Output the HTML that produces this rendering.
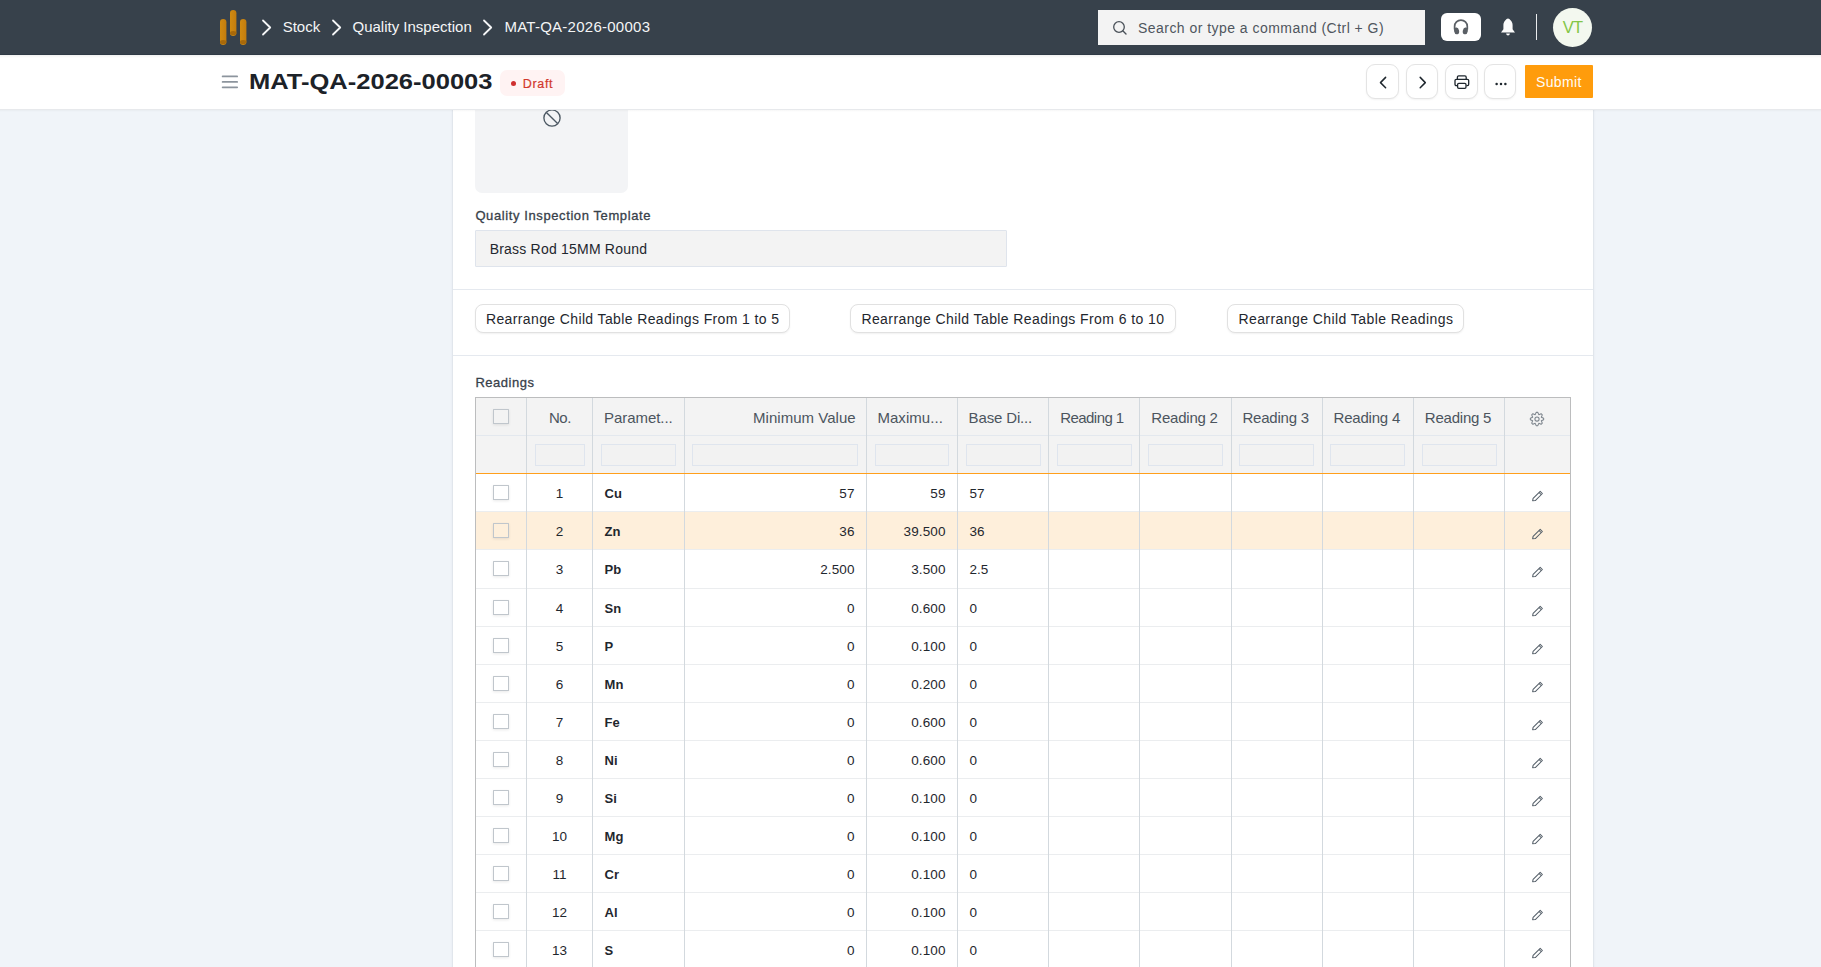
<!DOCTYPE html>
<html><head><meta charset="utf-8"><title>MAT-QA-2026-00003</title>
<style>
*{box-sizing:border-box;margin:0;padding:0}
html,body{width:1821px;height:967px;overflow:hidden}
body{position:relative;background:#f0f4f9;font-family:"Liberation Sans",sans-serif;color:#1f272e}
.abs{position:absolute}
.t{position:absolute;white-space:nowrap}
.z4{z-index:4}
.tbtn{top:64px;height:34.6px;border:1px solid #e4e4e4;border-radius:9px;background:#fff;box-shadow:0 1px 2px rgba(0,0,0,0.05)}
.btn{top:304.2px;height:29.3px;border:1px solid #e1e1e1;border-radius:8px;background:#fff;box-shadow:0 1px 2px rgba(0,0,0,0.06)}
.cb{width:15.5px;height:15px;border:1px solid #c0c6cc;border-radius:0.5px;background:transparent;box-shadow:0 1px 3px rgba(0,0,0,0.09)}
</style></head><body>
<div class="abs" style="left:0;top:0;width:1821px;height:54px;background:#37414b"></div>
<div class="abs" style="left:0;top:54px;width:1821px;height:1px;background:#2f3a45"></div>
<svg class="abs" style="left:218px;top:8px" width="32" height="40" viewBox="0 0 32 40">
<defs><linearGradient id="lg" x1="0" x2="1"><stop offset="0" stop-color="#d18a10"/><stop offset="1" stop-color="#c27c0e"/></linearGradient></defs>
<rect x="2" y="11" width="6.4" height="26" rx="3.2" fill="url(#lg)"/><ellipse cx="5.2" cy="34" rx="3.2" ry="2" fill="#a8690a"/>
<rect x="12" y="2" width="6.4" height="26" rx="3.2" fill="url(#lg)"/><ellipse cx="15.2" cy="25" rx="3.2" ry="2" fill="#a8690a"/>
<rect x="22" y="11" width="6.4" height="26" rx="3.2" fill="url(#lg)"/><ellipse cx="25.2" cy="34" rx="3.2" ry="2" fill="#a8690a"/>
</svg>
<svg class="abs" style="left:261px;top:19px" width="12" height="17" viewBox="0 0 12 17"><path d="M2 1.5 L9.2 8.5 L2 15.5" fill="none" stroke="#f5f6f7" stroke-width="1.8" stroke-linecap="round" stroke-linejoin="round"/></svg>
<svg class="abs" style="left:330.5px;top:19px" width="12" height="17" viewBox="0 0 12 17"><path d="M2 1.5 L9.2 8.5 L2 15.5" fill="none" stroke="#f5f6f7" stroke-width="1.8" stroke-linecap="round" stroke-linejoin="round"/></svg>
<svg class="abs" style="left:482px;top:19px" width="12" height="17" viewBox="0 0 12 17"><path d="M2 1.5 L9.2 8.5 L2 15.5" fill="none" stroke="#f5f6f7" stroke-width="1.8" stroke-linecap="round" stroke-linejoin="round"/></svg>
<div class="t " style="top:19.30px;font-size:15px;line-height:15px;left:282.7px;color:#f4f5f6;">Stock</div>
<div class="t " style="top:19.30px;font-size:15px;line-height:15px;left:352.5px;color:#f4f5f6;">Quality Inspection</div>
<div class="t " style="top:19.30px;font-size:15px;line-height:15px;left:504.4px;color:#f4f5f6;letter-spacing:0.26px;">MAT-QA-2026-00003</div>
<div class="abs" style="left:1098px;top:10px;width:327px;height:35px;background:#f3f3f3;border-radius:0"></div>
<svg class="abs" style="left:1112px;top:20px" width="16" height="16" viewBox="0 0 16 16"><circle cx="7" cy="7" r="5.3" fill="none" stroke="#4a5159" stroke-width="1.3"/><path d="M11 11 L14 14" stroke="#4a5159" stroke-width="1.4" stroke-linecap="round"/></svg>
<div class="t " style="top:20.85px;font-size:14px;line-height:14px;left:1138px;color:#4f565e;letter-spacing:0.46px;">Search or type a command (Ctrl + G)</div>
<div class="abs" style="left:1441px;top:13px;width:40px;height:28px;background:#fff;border-radius:6px"></div>
<svg class="abs" style="left:1452px;top:17px" width="18" height="18" viewBox="0 0 18 18">
<path d="M2.6 12.5 V9.4 a6.35 6.35 0 0 1 12.7 0 V12.5" fill="none" stroke="#5a5f65" stroke-width="1.7"/>
<ellipse cx="4.6" cy="13.9" rx="2.5" ry="3.4" transform="rotate(-12 4.6 13.9)" fill="#5a5f65"/>
<ellipse cx="13.3" cy="13.9" rx="2.5" ry="3.4" transform="rotate(12 13.3 13.9)" fill="#5a5f65"/>
</svg>
<svg class="abs" style="left:1500px;top:18px" width="16" height="18" viewBox="0 0 16 18">
<path d="M8 0.5 C7 0.5 6.2 1.3 5.2 2.6 C4 4 3.4 5.4 3.4 7.2 V11.3 L1 14.6 H15 L12.6 11.3 V7.2 C12.6 5.4 12 4 10.8 2.6 C9.8 1.3 9 0.5 8 0.5 Z" fill="#fbfbfb"/>
<path d="M6.1 15.6 C6.3 16.9 7 17.4 8 17.4 C9 17.4 9.7 16.9 9.9 15.6 Z" fill="#fbfbfb"/>
</svg>
<div class="abs" style="left:1536px;top:14px;width:1px;height:26px;background:#e9ebed"></div>
<div class="abs" style="left:1553px;top:7.8px;width:39.2px;height:39.2px;border-radius:50%;background:#f3f8ef"></div>
<div class="t " style="top:19.03px;font-size:16.5px;line-height:16.5px;left:1562.8px;color:#82c648;letter-spacing:-0.9px;">VT</div>
<div class="abs" style="left:0;top:55px;width:1821px;height:54px;background:#fff;z-index:3"></div>
<div class="abs" style="left:0;top:55px;width:1821px;height:3px;background:linear-gradient(rgba(0,0,0,0.06),rgba(0,0,0,0));z-index:3"></div>
<div class="abs" style="left:0;top:109px;width:1821px;height:1px;background:#e7e9ec;z-index:3"></div>
<div class="abs" style="left:0;top:110px;width:1821px;height:2px;background:linear-gradient(rgba(0,0,0,0.035),rgba(0,0,0,0));z-index:3"></div>
<svg class="abs z4" style="left:218px;top:70px" width="24" height="24" viewBox="0 0 24 24"><g stroke="#8c949d" stroke-width="1.7" stroke-linecap="round"><path d="M4.6 6.4 H19.2"/><path d="M4.6 11.9 H19.2"/><path d="M4.6 17.3 H19.2"/></g></svg>
<div class="t z4" style="top:70.68px;font-size:22px;line-height:22px;left:248.6px;font-weight:700;color:#1c2228;transform:scaleX(1.16);transform-origin:0 0;">MAT-QA-2026-00003</div>
<div class="abs z4" style="left:500px;top:70px;width:65px;height:26px;border-radius:7px;background:#fff3f3"></div>
<div class="abs z4" style="left:511px;top:80.6px;width:5px;height:5px;border-radius:50%;background:#cf2f2f"></div>
<div class="t z4" style="top:78.22px;font-size:12.5px;line-height:12.5px;left:522.8px;color:#d2382c;letter-spacing:0.65px;-webkit-text-stroke:0.2px #d2382c;">Draft</div>
<div class="abs z4 tbtn" style="left:1366px;width:32.5px"><svg class="abs" style="left:11px;top:10px" width="10" height="14" viewBox="0 0 10 14"><path d="M7.6 2.4 L2.5 7.6 L7.6 12.7" fill="none" stroke="#1f272e" stroke-width="1.5" stroke-linecap="round" stroke-linejoin="round"/></svg></div>
<div class="abs z4 tbtn" style="left:1406px;width:31.5px"><svg class="abs" style="left:10.5px;top:10px" width="10" height="14" viewBox="0 0 10 14"><path d="M2.2 2.4 L7.3 7.6 L2.2 12.7" fill="none" stroke="#1f272e" stroke-width="1.5" stroke-linecap="round" stroke-linejoin="round"/></svg></div>
<div class="abs z4 tbtn" style="left:1445.4px;width:32.2px"><svg class="abs" style="left:8px;top:9.5px" width="16" height="15" viewBox="0 0 16 15">
<path d="M3.4 4.3 V2.2 C3.4 1.4 4 0.9 4.7 0.9 H10.9 C11.6 0.9 12.2 1.4 12.2 2.2 V4.3" fill="none" stroke="#1f272e" stroke-width="1.3"/>
<path d="M3.2 10.6 H2.3 C1.5 10.6 1 10 1 9.3 V5.6 C1 4.8 1.6 4.3 2.3 4.3 H13.4 C14.2 4.3 14.7 4.9 14.7 5.6 V9.3 C14.7 10.1 14.1 10.6 13.4 10.6 H12.4" fill="none" stroke="#1f272e" stroke-width="1.3"/>
<rect x="3.6" y="8.4" width="8.4" height="4.9" rx="1.2" fill="none" stroke="#1f272e" stroke-width="1.3"/>
</svg></div>
<div class="abs z4 tbtn" style="left:1484.3px;width:32.2px"><svg class="abs" style="left:9px;top:17px" width="14" height="4" viewBox="0 0 14 4"><circle cx="2.6" cy="2" r="1.25" fill="#1f272e"/><circle cx="7" cy="2" r="1.25" fill="#1f272e"/><circle cx="11.4" cy="2" r="1.25" fill="#1f272e"/></svg></div>
<div class="abs z4" style="left:1524.7px;top:64.8px;width:68.5px;height:33.4px;background:#ff9c0c;border-radius:1px"></div>
<div class="t z4" style="top:74.85px;font-size:14px;line-height:14px;left:1536px;color:#fffdf8;letter-spacing:0.35px;">Submit</div>
<div class="abs" style="left:452px;top:90px;width:1142px;height:900px;background:#fff;border-left:1px solid #e1e6ec;border-right:1px solid #e1e6ec;box-shadow:0 0 2px rgba(30,50,80,0.06)"></div>
<div class="abs" style="left:475px;top:90px;width:153px;height:103px;background:#f3f4f6;border-radius:7px"></div>
<svg class="abs" style="left:542px;top:108px" width="20" height="20" viewBox="0 0 20 20"><circle cx="10" cy="10" r="8.1" fill="none" stroke="#4c5863" stroke-width="1.35"/><path d="M4.4 4.4 L15.6 15.6" stroke="#4c5863" stroke-width="1.35"/></svg>
<div class="t " style="top:209.10px;font-size:13px;line-height:13px;left:475.4px;color:#38414a;letter-spacing:0.6px;-webkit-text-stroke:0.3px #38414a;">Quality Inspection Template</div>
<div class="abs" style="left:475px;top:230px;width:532px;height:37px;background:#f3f3f3;border:1px solid #dfe4ec;border-radius:1px"></div>
<div class="t " style="top:241.95px;font-size:14px;line-height:14px;left:489.7px;color:#1f272e;letter-spacing:0.21px;">Brass Rod 15MM Round</div>
<div class="abs" style="left:453px;top:289px;width:1140px;height:1px;background:#e5e9ef"></div>
<div class="abs btn" style="left:474.5px;width:315px"></div><div class="t " style="top:312.15px;font-size:14px;line-height:14px;left:485.9px;color:#1f272e;letter-spacing:0.38px;">Rearrange Child Table Readings From 1 to 5</div>
<div class="abs btn" style="left:850px;width:326px"></div><div class="t " style="top:312.15px;font-size:14px;line-height:14px;left:861.4px;color:#1f272e;letter-spacing:0.41px;">Rearrange Child Table Readings From 6 to 10</div>
<div class="abs btn" style="left:1227px;width:237px"></div><div class="t " style="top:312.15px;font-size:14px;line-height:14px;left:1238.4px;color:#1f272e;letter-spacing:0.43px;">Rearrange Child Table Readings</div>
<div class="abs" style="left:453px;top:355px;width:1140px;height:1px;background:#e5e9ef"></div>
<div class="t " style="top:376.00px;font-size:13px;line-height:13px;left:475.4px;color:#38414a;letter-spacing:0.52px;-webkit-text-stroke:0.3px #38414a;">Readings</div>
<div class="abs" style="left:475px;top:397px;width:1096px;height:575px;background:#fff;border:1px solid #bcbdbe;border-bottom:none"></div>
<div class="abs" style="left:476px;top:398px;width:1094px;height:75px;background:#f3f3f3"></div>
<div class="abs" style="left:476px;top:512px;width:1094px;height:37px;background:#feefdb"></div>
<div class="abs" style="left:476px;top:435px;width:1094px;height:1px;background:#e3e8ee"></div>
<div class="abs" style="left:476px;top:511px;width:1094px;height:1px;background:#ebedef"></div>
<div class="abs" style="left:476px;top:549px;width:1094px;height:1px;background:#ebedef"></div>
<div class="abs" style="left:476px;top:588px;width:1094px;height:1px;background:#ebedef"></div>
<div class="abs" style="left:476px;top:626px;width:1094px;height:1px;background:#ebedef"></div>
<div class="abs" style="left:476px;top:664px;width:1094px;height:1px;background:#ebedef"></div>
<div class="abs" style="left:476px;top:702px;width:1094px;height:1px;background:#ebedef"></div>
<div class="abs" style="left:476px;top:740px;width:1094px;height:1px;background:#ebedef"></div>
<div class="abs" style="left:476px;top:778px;width:1094px;height:1px;background:#ebedef"></div>
<div class="abs" style="left:476px;top:816px;width:1094px;height:1px;background:#ebedef"></div>
<div class="abs" style="left:476px;top:854px;width:1094px;height:1px;background:#ebedef"></div>
<div class="abs" style="left:476px;top:892px;width:1094px;height:1px;background:#ebedef"></div>
<div class="abs" style="left:476px;top:930px;width:1094px;height:1px;background:#ebedef"></div>
<div class="abs" style="left:526px;top:398px;width:1px;height:570px;background:#d3d9de"></div>
<div class="abs" style="left:592px;top:398px;width:1px;height:570px;background:#d3d9de"></div>
<div class="abs" style="left:684px;top:398px;width:1px;height:570px;background:#d3d9de"></div>
<div class="abs" style="left:866px;top:398px;width:1px;height:570px;background:#d3d9de"></div>
<div class="abs" style="left:957px;top:398px;width:1px;height:570px;background:#d3d9de"></div>
<div class="abs" style="left:1048px;top:398px;width:1px;height:570px;background:#d3d9de"></div>
<div class="abs" style="left:1139px;top:398px;width:1px;height:570px;background:#d3d9de"></div>
<div class="abs" style="left:1231px;top:398px;width:1px;height:570px;background:#d3d9de"></div>
<div class="abs" style="left:1322px;top:398px;width:1px;height:570px;background:#d3d9de"></div>
<div class="abs" style="left:1413px;top:398px;width:1px;height:570px;background:#d3d9de"></div>
<div class="abs" style="left:1504px;top:398px;width:1px;height:570px;background:#d3d9de"></div>
<div class="abs" style="left:476px;top:473px;width:1094px;height:1px;background:#ff9f1c"></div>
<div class="abs cb" style="left:493px;top:409px"></div>
<div class="t " style="top:410.40px;font-size:15px;line-height:15px;left:529.9px;width:60px;text-align:center;color:#4c555e;letter-spacing:-0.45px;">No.</div>
<div class="t " style="top:410.40px;font-size:15px;line-height:15px;left:604.0px;color:#4c555e;letter-spacing:-0.05px;">Paramet...</div>
<div class="t " style="top:410.40px;font-size:15px;line-height:15px;right:965.4px;color:#4c555e;letter-spacing:0.02px;">Minimum Value</div>
<div class="t " style="top:410.40px;font-size:15px;line-height:15px;left:877.4px;color:#4c555e;letter-spacing:0.06px;">Maximu...</div>
<div class="t " style="top:410.40px;font-size:15px;line-height:15px;left:968.6px;color:#4c555e;letter-spacing:-0.15px;">Base Di...</div>
<div class="t " style="top:410.40px;font-size:15px;line-height:15px;left:1060.1999999999998px;color:#4c555e;letter-spacing:-0.55px;">Reading 1</div>
<div class="t " style="top:410.40px;font-size:15px;line-height:15px;left:1151.3px;color:#4c555e;letter-spacing:-0.22px;">Reading 2</div>
<div class="t " style="top:410.40px;font-size:15px;line-height:15px;left:1242.5px;color:#4c555e;letter-spacing:-0.22px;">Reading 3</div>
<div class="t " style="top:410.40px;font-size:15px;line-height:15px;left:1333.6px;color:#4c555e;letter-spacing:-0.22px;">Reading 4</div>
<div class="t " style="top:410.40px;font-size:15px;line-height:15px;left:1424.8px;color:#4c555e;letter-spacing:-0.22px;">Reading 5</div>
<svg class="abs" style="left:1529.4px;top:410.7px" width="16" height="16" viewBox="0 0 16 16"><g fill="none" stroke="#7d858d" stroke-width="1.05" stroke-linejoin="round"><path d="M7.18 1.35 L8.82 1.35 L9.80 3.66 L12.12 2.72 L13.28 3.88 L12.34 6.20 L14.65 7.18 L14.65 8.82 L12.34 9.80 L13.28 12.12 L12.12 13.28 L9.80 12.34 L8.82 14.65 L7.18 14.65 L6.20 12.34 L3.88 13.28 L2.72 12.12 L3.66 9.80 L1.35 8.82 L1.35 7.18 L3.66 6.20 L2.72 3.88 L3.88 2.72 L6.20 3.66 Z"/><circle cx="8" cy="8" r="2.1"/></g></svg>
<div class="abs" style="left:535px;top:444px;width:50px;height:22px;background:#f2f2f2;border:1px solid #dfe5ee"></div>
<div class="abs" style="left:601px;top:444px;width:75px;height:22px;background:#f2f2f2;border:1px solid #dfe5ee"></div>
<div class="abs" style="left:692px;top:444px;width:166px;height:22px;background:#f2f2f2;border:1px solid #dfe5ee"></div>
<div class="abs" style="left:875px;top:444px;width:74px;height:22px;background:#f2f2f2;border:1px solid #dfe5ee"></div>
<div class="abs" style="left:966px;top:444px;width:75px;height:22px;background:#f2f2f2;border:1px solid #dfe5ee"></div>
<div class="abs" style="left:1057px;top:444px;width:75px;height:22px;background:#f2f2f2;border:1px solid #dfe5ee"></div>
<div class="abs" style="left:1148px;top:444px;width:75px;height:22px;background:#f2f2f2;border:1px solid #dfe5ee"></div>
<div class="abs" style="left:1239px;top:444px;width:75px;height:22px;background:#f2f2f2;border:1px solid #dfe5ee"></div>
<div class="abs" style="left:1330px;top:444px;width:75px;height:22px;background:#f2f2f2;border:1px solid #dfe5ee"></div>
<div class="abs" style="left:1422px;top:444px;width:75px;height:22px;background:#f2f2f2;border:1px solid #dfe5ee"></div>
<div class="abs cb" style="left:493px;top:485.00px"></div>
<div class="t " style="top:486.57px;font-size:13.5px;line-height:13.5px;left:529.5px;width:60px;text-align:center;color:#1f272e;">1</div>
<div class="t " style="top:487.00px;font-size:13px;line-height:13px;left:604.6px;font-weight:700;color:#1f272e;">Cu</div>
<div class="t " style="top:486.57px;font-size:13.5px;line-height:13.5px;right:966.5px;color:#1f272e;letter-spacing:0.1px;">57</div>
<div class="t " style="top:486.57px;font-size:13.5px;line-height:13.5px;right:875.5px;color:#1f272e;letter-spacing:0.1px;">59</div>
<div class="t " style="top:486.57px;font-size:13.5px;line-height:13.5px;left:969.4px;color:#1f272e;letter-spacing:0.1px;">57</div>
<svg class="abs" style="left:1530px;top:490.00px" width="14" height="13" viewBox="0 0 14 13"><path d="M2.6 10.8 L3.1 8.4 L10.2 1.3 L12.4 3.5 L5.3 10.6 Z M9 2.5 L11.2 4.7" fill="none" stroke="#56606a" stroke-width="1.05" stroke-linejoin="round"/></svg>
<div class="abs cb" style="left:493px;top:523.00px"></div>
<div class="t " style="top:524.57px;font-size:13.5px;line-height:13.5px;left:529.5px;width:60px;text-align:center;color:#1f272e;">2</div>
<div class="t " style="top:525.00px;font-size:13px;line-height:13px;left:604.6px;font-weight:700;color:#1f272e;">Zn</div>
<div class="t " style="top:524.57px;font-size:13.5px;line-height:13.5px;right:966.5px;color:#1f272e;letter-spacing:0.1px;">36</div>
<div class="t " style="top:524.57px;font-size:13.5px;line-height:13.5px;right:875.5px;color:#1f272e;letter-spacing:0.1px;">39.500</div>
<div class="t " style="top:524.57px;font-size:13.5px;line-height:13.5px;left:969.4px;color:#1f272e;letter-spacing:0.1px;">36</div>
<svg class="abs" style="left:1530px;top:528.00px" width="14" height="13" viewBox="0 0 14 13"><path d="M2.6 10.8 L3.1 8.4 L10.2 1.3 L12.4 3.5 L5.3 10.6 Z M9 2.5 L11.2 4.7" fill="none" stroke="#56606a" stroke-width="1.05" stroke-linejoin="round"/></svg>
<div class="abs cb" style="left:493px;top:561.00px"></div>
<div class="t " style="top:562.57px;font-size:13.5px;line-height:13.5px;left:529.5px;width:60px;text-align:center;color:#1f272e;">3</div>
<div class="t " style="top:563.00px;font-size:13px;line-height:13px;left:604.6px;font-weight:700;color:#1f272e;">Pb</div>
<div class="t " style="top:562.57px;font-size:13.5px;line-height:13.5px;right:966.5px;color:#1f272e;letter-spacing:0.1px;">2.500</div>
<div class="t " style="top:562.57px;font-size:13.5px;line-height:13.5px;right:875.5px;color:#1f272e;letter-spacing:0.1px;">3.500</div>
<div class="t " style="top:562.57px;font-size:13.5px;line-height:13.5px;left:969.4px;color:#1f272e;letter-spacing:0.1px;">2.5</div>
<svg class="abs" style="left:1530px;top:566.00px" width="14" height="13" viewBox="0 0 14 13"><path d="M2.6 10.8 L3.1 8.4 L10.2 1.3 L12.4 3.5 L5.3 10.6 Z M9 2.5 L11.2 4.7" fill="none" stroke="#56606a" stroke-width="1.05" stroke-linejoin="round"/></svg>
<div class="abs cb" style="left:493px;top:600.00px"></div>
<div class="t " style="top:601.57px;font-size:13.5px;line-height:13.5px;left:529.5px;width:60px;text-align:center;color:#1f272e;">4</div>
<div class="t " style="top:602.00px;font-size:13px;line-height:13px;left:604.6px;font-weight:700;color:#1f272e;">Sn</div>
<div class="t " style="top:601.57px;font-size:13.5px;line-height:13.5px;right:966.5px;color:#1f272e;letter-spacing:0.1px;">0</div>
<div class="t " style="top:601.57px;font-size:13.5px;line-height:13.5px;right:875.5px;color:#1f272e;letter-spacing:0.1px;">0.600</div>
<div class="t " style="top:601.57px;font-size:13.5px;line-height:13.5px;left:969.4px;color:#1f272e;letter-spacing:0.1px;">0</div>
<svg class="abs" style="left:1530px;top:605.00px" width="14" height="13" viewBox="0 0 14 13"><path d="M2.6 10.8 L3.1 8.4 L10.2 1.3 L12.4 3.5 L5.3 10.6 Z M9 2.5 L11.2 4.7" fill="none" stroke="#56606a" stroke-width="1.05" stroke-linejoin="round"/></svg>
<div class="abs cb" style="left:493px;top:638.00px"></div>
<div class="t " style="top:639.57px;font-size:13.5px;line-height:13.5px;left:529.5px;width:60px;text-align:center;color:#1f272e;">5</div>
<div class="t " style="top:640.00px;font-size:13px;line-height:13px;left:604.6px;font-weight:700;color:#1f272e;">P</div>
<div class="t " style="top:639.57px;font-size:13.5px;line-height:13.5px;right:966.5px;color:#1f272e;letter-spacing:0.1px;">0</div>
<div class="t " style="top:639.57px;font-size:13.5px;line-height:13.5px;right:875.5px;color:#1f272e;letter-spacing:0.1px;">0.100</div>
<div class="t " style="top:639.57px;font-size:13.5px;line-height:13.5px;left:969.4px;color:#1f272e;letter-spacing:0.1px;">0</div>
<svg class="abs" style="left:1530px;top:643.00px" width="14" height="13" viewBox="0 0 14 13"><path d="M2.6 10.8 L3.1 8.4 L10.2 1.3 L12.4 3.5 L5.3 10.6 Z M9 2.5 L11.2 4.7" fill="none" stroke="#56606a" stroke-width="1.05" stroke-linejoin="round"/></svg>
<div class="abs cb" style="left:493px;top:676.00px"></div>
<div class="t " style="top:677.57px;font-size:13.5px;line-height:13.5px;left:529.5px;width:60px;text-align:center;color:#1f272e;">6</div>
<div class="t " style="top:678.00px;font-size:13px;line-height:13px;left:604.6px;font-weight:700;color:#1f272e;">Mn</div>
<div class="t " style="top:677.57px;font-size:13.5px;line-height:13.5px;right:966.5px;color:#1f272e;letter-spacing:0.1px;">0</div>
<div class="t " style="top:677.57px;font-size:13.5px;line-height:13.5px;right:875.5px;color:#1f272e;letter-spacing:0.1px;">0.200</div>
<div class="t " style="top:677.57px;font-size:13.5px;line-height:13.5px;left:969.4px;color:#1f272e;letter-spacing:0.1px;">0</div>
<svg class="abs" style="left:1530px;top:681.00px" width="14" height="13" viewBox="0 0 14 13"><path d="M2.6 10.8 L3.1 8.4 L10.2 1.3 L12.4 3.5 L5.3 10.6 Z M9 2.5 L11.2 4.7" fill="none" stroke="#56606a" stroke-width="1.05" stroke-linejoin="round"/></svg>
<div class="abs cb" style="left:493px;top:714.00px"></div>
<div class="t " style="top:715.57px;font-size:13.5px;line-height:13.5px;left:529.5px;width:60px;text-align:center;color:#1f272e;">7</div>
<div class="t " style="top:716.00px;font-size:13px;line-height:13px;left:604.6px;font-weight:700;color:#1f272e;">Fe</div>
<div class="t " style="top:715.57px;font-size:13.5px;line-height:13.5px;right:966.5px;color:#1f272e;letter-spacing:0.1px;">0</div>
<div class="t " style="top:715.57px;font-size:13.5px;line-height:13.5px;right:875.5px;color:#1f272e;letter-spacing:0.1px;">0.600</div>
<div class="t " style="top:715.57px;font-size:13.5px;line-height:13.5px;left:969.4px;color:#1f272e;letter-spacing:0.1px;">0</div>
<svg class="abs" style="left:1530px;top:719.00px" width="14" height="13" viewBox="0 0 14 13"><path d="M2.6 10.8 L3.1 8.4 L10.2 1.3 L12.4 3.5 L5.3 10.6 Z M9 2.5 L11.2 4.7" fill="none" stroke="#56606a" stroke-width="1.05" stroke-linejoin="round"/></svg>
<div class="abs cb" style="left:493px;top:752.00px"></div>
<div class="t " style="top:753.57px;font-size:13.5px;line-height:13.5px;left:529.5px;width:60px;text-align:center;color:#1f272e;">8</div>
<div class="t " style="top:754.00px;font-size:13px;line-height:13px;left:604.6px;font-weight:700;color:#1f272e;">Ni</div>
<div class="t " style="top:753.57px;font-size:13.5px;line-height:13.5px;right:966.5px;color:#1f272e;letter-spacing:0.1px;">0</div>
<div class="t " style="top:753.57px;font-size:13.5px;line-height:13.5px;right:875.5px;color:#1f272e;letter-spacing:0.1px;">0.600</div>
<div class="t " style="top:753.57px;font-size:13.5px;line-height:13.5px;left:969.4px;color:#1f272e;letter-spacing:0.1px;">0</div>
<svg class="abs" style="left:1530px;top:757.00px" width="14" height="13" viewBox="0 0 14 13"><path d="M2.6 10.8 L3.1 8.4 L10.2 1.3 L12.4 3.5 L5.3 10.6 Z M9 2.5 L11.2 4.7" fill="none" stroke="#56606a" stroke-width="1.05" stroke-linejoin="round"/></svg>
<div class="abs cb" style="left:493px;top:790.00px"></div>
<div class="t " style="top:791.57px;font-size:13.5px;line-height:13.5px;left:529.5px;width:60px;text-align:center;color:#1f272e;">9</div>
<div class="t " style="top:792.00px;font-size:13px;line-height:13px;left:604.6px;font-weight:700;color:#1f272e;">Si</div>
<div class="t " style="top:791.57px;font-size:13.5px;line-height:13.5px;right:966.5px;color:#1f272e;letter-spacing:0.1px;">0</div>
<div class="t " style="top:791.57px;font-size:13.5px;line-height:13.5px;right:875.5px;color:#1f272e;letter-spacing:0.1px;">0.100</div>
<div class="t " style="top:791.57px;font-size:13.5px;line-height:13.5px;left:969.4px;color:#1f272e;letter-spacing:0.1px;">0</div>
<svg class="abs" style="left:1530px;top:795.00px" width="14" height="13" viewBox="0 0 14 13"><path d="M2.6 10.8 L3.1 8.4 L10.2 1.3 L12.4 3.5 L5.3 10.6 Z M9 2.5 L11.2 4.7" fill="none" stroke="#56606a" stroke-width="1.05" stroke-linejoin="round"/></svg>
<div class="abs cb" style="left:493px;top:828.00px"></div>
<div class="t " style="top:829.57px;font-size:13.5px;line-height:13.5px;left:529.5px;width:60px;text-align:center;color:#1f272e;">10</div>
<div class="t " style="top:830.00px;font-size:13px;line-height:13px;left:604.6px;font-weight:700;color:#1f272e;">Mg</div>
<div class="t " style="top:829.57px;font-size:13.5px;line-height:13.5px;right:966.5px;color:#1f272e;letter-spacing:0.1px;">0</div>
<div class="t " style="top:829.57px;font-size:13.5px;line-height:13.5px;right:875.5px;color:#1f272e;letter-spacing:0.1px;">0.100</div>
<div class="t " style="top:829.57px;font-size:13.5px;line-height:13.5px;left:969.4px;color:#1f272e;letter-spacing:0.1px;">0</div>
<svg class="abs" style="left:1530px;top:833.00px" width="14" height="13" viewBox="0 0 14 13"><path d="M2.6 10.8 L3.1 8.4 L10.2 1.3 L12.4 3.5 L5.3 10.6 Z M9 2.5 L11.2 4.7" fill="none" stroke="#56606a" stroke-width="1.05" stroke-linejoin="round"/></svg>
<div class="abs cb" style="left:493px;top:866.00px"></div>
<div class="t " style="top:867.57px;font-size:13.5px;line-height:13.5px;left:529.5px;width:60px;text-align:center;color:#1f272e;">11</div>
<div class="t " style="top:868.00px;font-size:13px;line-height:13px;left:604.6px;font-weight:700;color:#1f272e;">Cr</div>
<div class="t " style="top:867.57px;font-size:13.5px;line-height:13.5px;right:966.5px;color:#1f272e;letter-spacing:0.1px;">0</div>
<div class="t " style="top:867.57px;font-size:13.5px;line-height:13.5px;right:875.5px;color:#1f272e;letter-spacing:0.1px;">0.100</div>
<div class="t " style="top:867.57px;font-size:13.5px;line-height:13.5px;left:969.4px;color:#1f272e;letter-spacing:0.1px;">0</div>
<svg class="abs" style="left:1530px;top:871.00px" width="14" height="13" viewBox="0 0 14 13"><path d="M2.6 10.8 L3.1 8.4 L10.2 1.3 L12.4 3.5 L5.3 10.6 Z M9 2.5 L11.2 4.7" fill="none" stroke="#56606a" stroke-width="1.05" stroke-linejoin="round"/></svg>
<div class="abs cb" style="left:493px;top:904.00px"></div>
<div class="t " style="top:905.57px;font-size:13.5px;line-height:13.5px;left:529.5px;width:60px;text-align:center;color:#1f272e;">12</div>
<div class="t " style="top:906.00px;font-size:13px;line-height:13px;left:604.6px;font-weight:700;color:#1f272e;">Al</div>
<div class="t " style="top:905.57px;font-size:13.5px;line-height:13.5px;right:966.5px;color:#1f272e;letter-spacing:0.1px;">0</div>
<div class="t " style="top:905.57px;font-size:13.5px;line-height:13.5px;right:875.5px;color:#1f272e;letter-spacing:0.1px;">0.100</div>
<div class="t " style="top:905.57px;font-size:13.5px;line-height:13.5px;left:969.4px;color:#1f272e;letter-spacing:0.1px;">0</div>
<svg class="abs" style="left:1530px;top:909.00px" width="14" height="13" viewBox="0 0 14 13"><path d="M2.6 10.8 L3.1 8.4 L10.2 1.3 L12.4 3.5 L5.3 10.6 Z M9 2.5 L11.2 4.7" fill="none" stroke="#56606a" stroke-width="1.05" stroke-linejoin="round"/></svg>
<div class="abs cb" style="left:493px;top:942.00px"></div>
<div class="t " style="top:943.57px;font-size:13.5px;line-height:13.5px;left:529.5px;width:60px;text-align:center;color:#1f272e;">13</div>
<div class="t " style="top:944.00px;font-size:13px;line-height:13px;left:604.6px;font-weight:700;color:#1f272e;">S</div>
<div class="t " style="top:943.57px;font-size:13.5px;line-height:13.5px;right:966.5px;color:#1f272e;letter-spacing:0.1px;">0</div>
<div class="t " style="top:943.57px;font-size:13.5px;line-height:13.5px;right:875.5px;color:#1f272e;letter-spacing:0.1px;">0.100</div>
<div class="t " style="top:943.57px;font-size:13.5px;line-height:13.5px;left:969.4px;color:#1f272e;letter-spacing:0.1px;">0</div>
<svg class="abs" style="left:1530px;top:947.00px" width="14" height="13" viewBox="0 0 14 13"><path d="M2.6 10.8 L3.1 8.4 L10.2 1.3 L12.4 3.5 L5.3 10.6 Z M9 2.5 L11.2 4.7" fill="none" stroke="#56606a" stroke-width="1.05" stroke-linejoin="round"/></svg>
</body></html>
